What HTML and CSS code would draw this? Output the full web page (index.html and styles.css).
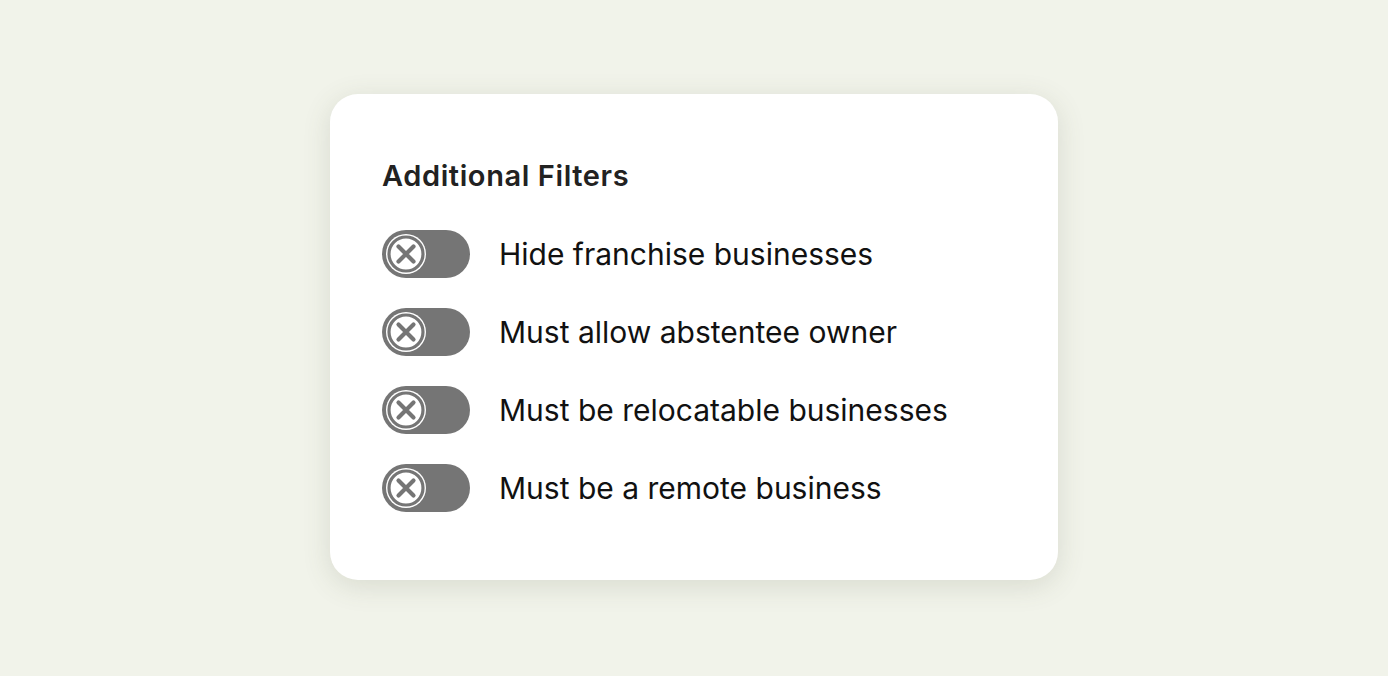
FILE: index.html
```html
<!DOCTYPE html>
<html lang="en">
<head>
<meta charset="utf-8">
<title>Additional Filters</title>
<link rel="stylesheet" href="styles.css">
</head>
<body>
<main class="page">
  <section class="card">
    <h2 class="title">Additional Filters</h2>
    <ul class="filters">
      <li class="filter">
        <span class="toggle" role="switch" aria-checked="false">
          <svg class="knob" viewBox="0 0 48 48" width="48" height="48"><circle cx="24" cy="24" r="20" fill="#fff"/><circle cx="24" cy="24" r="17" fill="none" stroke="#757575" stroke-width="3.2"/><path d="M16.5 16.5 L31.5 31.5 M31.5 16.5 L16.5 31.5" stroke="#757575" stroke-width="4.2" stroke-linecap="round"/></svg>
        </span>
        <span class="label">Hide franchise businesses</span>
      </li>
      <li class="filter">
        <span class="toggle" role="switch" aria-checked="false">
          <svg class="knob" viewBox="0 0 48 48" width="48" height="48"><circle cx="24" cy="24" r="20" fill="#fff"/><circle cx="24" cy="24" r="17" fill="none" stroke="#757575" stroke-width="3.2"/><path d="M16.5 16.5 L31.5 31.5 M31.5 16.5 L16.5 31.5" stroke="#757575" stroke-width="4.2" stroke-linecap="round"/></svg>
        </span>
        <span class="label">Must allow abstentee owner</span>
      </li>
      <li class="filter">
        <span class="toggle" role="switch" aria-checked="false">
          <svg class="knob" viewBox="0 0 48 48" width="48" height="48"><circle cx="24" cy="24" r="20" fill="#fff"/><circle cx="24" cy="24" r="17" fill="none" stroke="#757575" stroke-width="3.2"/><path d="M16.5 16.5 L31.5 31.5 M31.5 16.5 L16.5 31.5" stroke="#757575" stroke-width="4.2" stroke-linecap="round"/></svg>
        </span>
        <span class="label">Must be relocatable businesses</span>
      </li>
      <li class="filter">
        <span class="toggle" role="switch" aria-checked="false">
          <svg class="knob" viewBox="0 0 48 48" width="48" height="48"><circle cx="24" cy="24" r="20" fill="#fff"/><circle cx="24" cy="24" r="17" fill="none" stroke="#757575" stroke-width="3.2"/><path d="M16.5 16.5 L31.5 31.5 M31.5 16.5 L16.5 31.5" stroke="#757575" stroke-width="4.2" stroke-linecap="round"/></svg>
        </span>
        <span class="label">Must be a remote business</span>
      </li>
    </ul>
  </section>
</main>
</body>
</html>
```
FILE: styles.css
```css
* { box-sizing: border-box; }
html, body { margin: 0; padding: 0; }
body {
  background: #f1f3ea;
  font-family: Inter, "Noto Sans", sans-serif;
  color: #111;
}
.page {
  width: 1388px;
  height: 676px;
  padding-bottom: 2px;
  display: flex;
  align-items: center;
  justify-content: center;
}
.card {
  width: 728px;
  height: 486px;
  background: #fff;
  border-radius: 28px;
  box-shadow: 0 6px 28px rgba(90, 95, 70, 0.16);
  padding: 65px 52px 0 52px;
}
.title {
  margin: 0;
  font-size: 29px;
  line-height: 34px;
  font-weight: 600;
  color: #222;
  letter-spacing: 0.6px;
}
.filters {
  list-style: none;
  margin: 37px 0 0 0;
  padding: 0;
  display: flex;
  flex-direction: column;
  gap: 30px;
}
.filter {
  display: flex;
  align-items: center;
  gap: 29px;
  height: 48px;
}
.toggle {
  width: 88px;
  height: 48px;
  border-radius: 24px;
  background: #757575;
  display: flex;
  align-items: center;
  flex: none;
}
.knob { display: block; }
.label {
  font-size: 30px;
  line-height: 36px;
  font-weight: 400;
  color: #111;
  letter-spacing: 0;
}
```
